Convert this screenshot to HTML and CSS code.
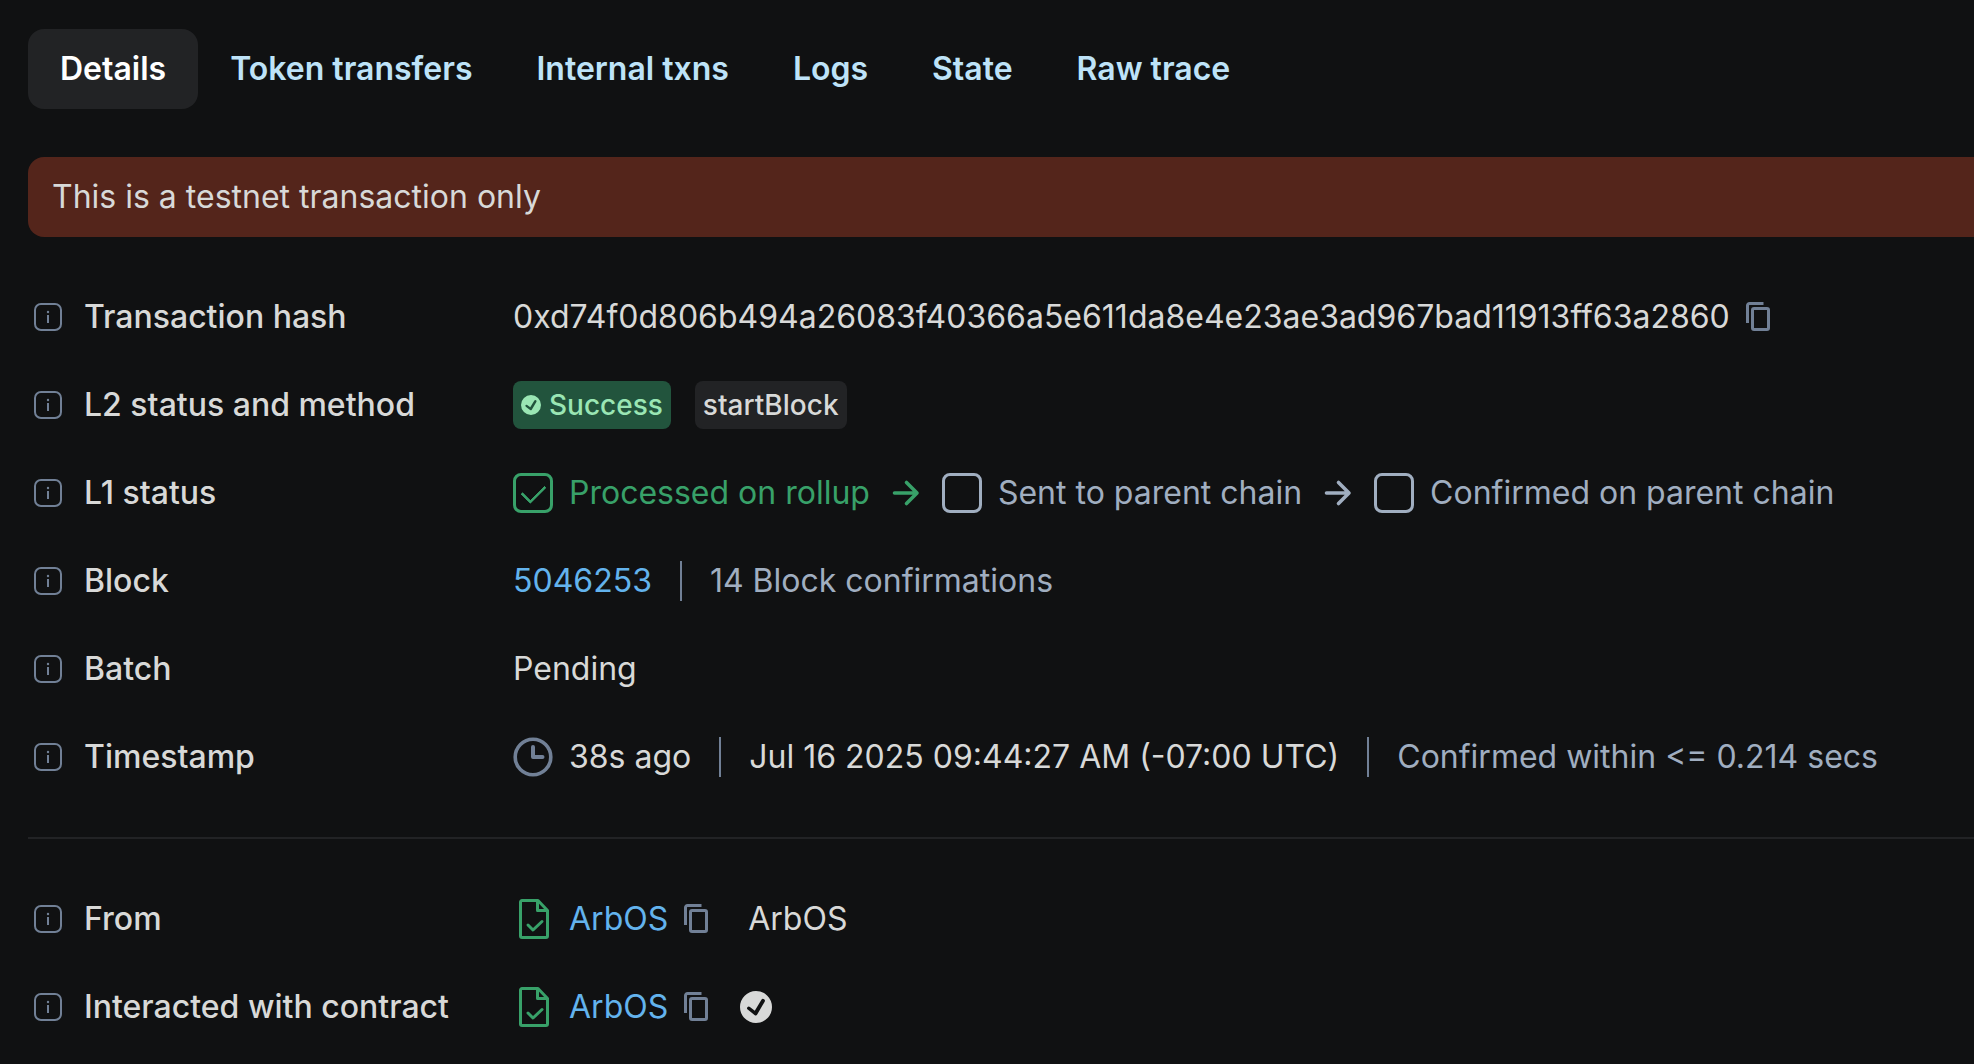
FILE: index.html
```html
<!DOCTYPE html>
<html lang="en">
<head>
  <meta charset="utf-8" />
  <meta name="viewport" content="width=device-width,initial-scale=1" />
  <title>Transaction details</title>
  <link rel="stylesheet" href="styles.css">
</head>
<body>
  <!-- shared icons -->
  <svg class="sprite" aria-hidden="true">
    <symbol id="info" viewBox="0 0 40 40">
      <rect x="7" y="7" width="26" height="26" rx="6" fill="none" stroke="currentColor" stroke-width="2"/>
      <path d="M20 18v8" stroke="currentColor" stroke-width="2"/>
      <circle cx="20" cy="15" r="1.2" fill="currentColor"/>
    </symbol>
    <symbol id="copy" viewBox="0 0 24 30">
      <path d="M1.5 21V3.5a2 2 0 0 1 2-2H17.5" fill="none" stroke="currentColor" stroke-width="3"/>
      <rect x="6.5" y="6.5" width="16" height="21" rx="1.5" fill="none" stroke="currentColor" stroke-width="3"/>
    </symbol>
    <symbol id="arrow" viewBox="0 0 40 40">
      <path d="M8.500 20H30M20.500 9.500 31 20 20.500 30.500" fill="none" stroke="currentColor" stroke-width="3.600" stroke-linecap="round" stroke-linejoin="round"/>
    </symbol>
    <symbol id="contract" viewBox="0 0 40 40">
      <path d="M25 1.500H9a1.500 1.500 0 0 0-1.500 1.500v34A1.500 1.500 0 0 0 9 38.500h24a1.500 1.500 0 0 0 1.500-1.500V11.500zM24.500 1.500V11.500h10" fill="none" stroke="currentColor" stroke-width="3" stroke-linejoin="round"/>
      <path d="M15 26l5 5 9-8.500" fill="none" stroke="currentColor" stroke-width="3" stroke-linecap="round" stroke-linejoin="round"/>
    </symbol>
    <symbol id="clock" viewBox="0 0 40 40">
      <circle cx="20" cy="20" r="17.800" fill="none" stroke="currentColor" stroke-width="3.600"/>
      <path d="M20 10v10h9.500" fill="none" stroke="currentColor" stroke-width="4" stroke-linecap="round" stroke-linejoin="round"/>
    </symbol>
    <symbol id="verified" viewBox="0 0 32 32">
      <path fill-rule="evenodd" fill="currentColor" d="M16 0a16 16 0 1 0 0 32 16 16 0 0 0 0-32zM24.500 11 17.200 23.400a1.800 1.800 0 0 1-2.700.5l-6.800-5.300a1.700 1.700 0 1 1 2.200-2.700l4.900 3.800 6.600-11a1.800 1.800 0 1 1 3.100 2.300z"/>
    </symbol>
  </svg>

  <main class="page">
    <nav class="tabs" role="tablist">
      <button class="tab active" role="tab" aria-selected="true">Details</button>
      <button class="tab" role="tab">Token transfers</button>
      <button class="tab" role="tab">Internal txns</button>
      <button class="tab" role="tab">Logs</button>
      <button class="tab" role="tab">State</button>
      <button class="tab" role="tab">Raw trace</button>
    </nav>

    <p class="alert">This is a testnet transaction only</p>

    <dl class="details">
      <div class="row">
        <dt><svg class="icon hint"><use href="#info"/></svg>Transaction hash</dt>
        <dd><span>0xd74f0d806b494a26083f40366a5e611da8e4e23ae3ad967bad11913ff63a2860</span>
          <button class="copy" aria-label="Copy hash"><svg><use href="#copy"/></svg></button></dd>
      </div>
      <div class="row">
        <dt><svg class="icon hint"><use href="#info"/></svg>L2 status and method</dt>
        <dd class="tags">
          <span class="tag success"><svg><use href="#verified"/></svg>Success</span>
          <span class="tag">startBlock</span>
        </dd>
      </div>
      <div class="row">
        <dt><svg class="icon hint"><use href="#info"/></svg>L1 status</dt>
        <dd class="steps">
          <label class="step done"><input type="checkbox" checked disabled>Processed on rollup</label>
          <svg class="icon done"><use href="#arrow"/></svg>
          <label class="step"><input type="checkbox" disabled>Sent to parent chain</label>
          <svg class="icon"><use href="#arrow"/></svg>
          <label class="step"><input type="checkbox" disabled>Confirmed on parent chain</label>
        </dd>
      </div>
      <div class="row">
        <dt><svg class="icon hint"><use href="#info"/></svg>Block</dt>
        <dd><a href="#">5046253</a><span class="sep"></span><span class="muted">14 Block confirmations</span></dd>
      </div>
      <div class="row">
        <dt><svg class="icon hint"><use href="#info"/></svg>Batch</dt>
        <dd>Pending</dd>
      </div>
      <div class="row">
        <dt><svg class="icon hint"><use href="#info"/></svg>Timestamp</dt>
        <dd><svg class="icon lead hint"><use href="#clock"/></svg>38s ago<span class="sep"></span>Jul 16 2025 09:44:27 AM (-07:00 UTC)<span class="sep"></span><span class="muted">Confirmed within &lt;= 0.214 secs</span></dd>
      </div>
    </dl>

    <hr>

    <dl class="details">
      <div class="row">
        <dt><svg class="icon hint"><use href="#info"/></svg>From</dt>
        <dd><svg class="icon lead done"><use href="#contract"/></svg><a href="#">ArbOS</a>
          <button class="copy" aria-label="Copy address"><svg><use href="#copy"/></svg></button>
          <span class="name">ArbOS</span></dd>
      </div>
      <div class="row">
        <dt><svg class="icon hint"><use href="#info"/></svg>Interacted with contract</dt>
        <dd><svg class="icon lead done"><use href="#contract"/></svg><a href="#">ArbOS</a>
          <button class="copy" aria-label="Copy address"><svg><use href="#copy"/></svg></button>
          <svg class="verified"><use href="#verified"/></svg></dd>
      </div>
    </dl>
  </main>
</body>
</html>
```

FILE: styles.css
```css
:root {
  --bg:#101112; --panel:#222325; --text:#d8d9d8; --muted:#a0aec0; --icon:#718096;
  --link:#63b3ed; --tab:#bee3f8; --green:#38a169; --alert:#54251b;
}
*{box-sizing:border-box;margin:0;padding:0}
body{background:var(--bg);color:var(--text);font:400 32px/48px Inter,sans-serif}
button{font:inherit;color:inherit;background:none;border:none;cursor:pointer}
a{color:var(--link);text-decoration:none}
svg{flex:none;display:block}
.sprite{position:absolute;width:0;height:0}
.page{padding:29px 0 32px 28px}

.tabs{display:flex}
.tab{height:80px;padding:0 32px;border-radius:16px;font-weight:600;color:var(--tab);white-space:nowrap}
.tab.active{background:var(--panel);color:#fff}

.alert{margin-top:48px;padding:16px 24px;background:var(--alert);border-radius:16px 0 0 16px}

.details{display:grid;gap:40px;margin-top:56px}
.row{display:grid;grid-template-columns:485px 1fr;height:48px}
dt,dd{display:flex;align-items:center;white-space:nowrap}
dt{gap:16px;font-weight:500}
hr{margin-top:56px;border:none;height:2px;background:var(--panel)}

.icon{width:40px;height:40px}
.lead{margin-right:16px}
.hint{color:var(--icon)}
.muted{color:var(--muted)}
.sep{width:2px;height:40px;margin:0 28px;background:var(--icon)}
.copy{margin-left:16px;color:var(--icon)}
.copy svg{width:24px;height:30px}
.name{margin-left:40px}
.verified{width:32px;height:32px;margin-left:32px}

.tags{gap:24px}
.tag{display:flex;align-items:center;gap:8px;height:48px;padding:0 8px;border-radius:8px;background:var(--panel);font-size:28px;font-weight:500}
.tag svg{width:20px;height:20px}
.success{background:#22543d;color:#9ae6b4}

.steps{gap:16px;color:var(--muted)}
.step{display:flex;align-items:center;gap:16px}
.done{color:var(--green)}
.step input{appearance:none;display:grid;place-items:center;width:40px;height:40px;border:3px solid currentColor;border-radius:8px;color:inherit}
.step input:checked::before{content:"";width:20px;height:11px;margin-bottom:5px;border:solid currentColor;border-width:0 0 3px 3px;border-radius:1px;transform:rotate(-45deg)}
```
